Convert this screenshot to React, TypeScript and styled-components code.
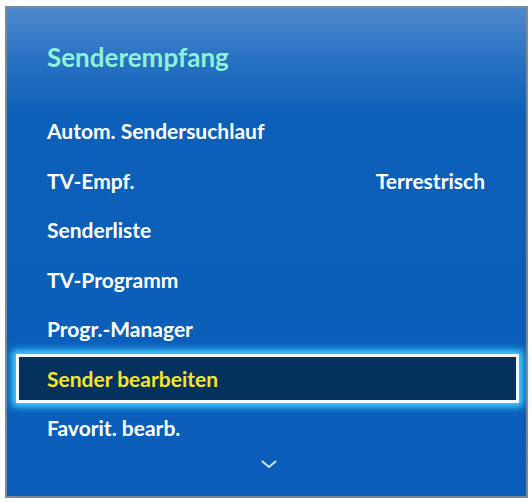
import styled, { createGlobalStyle } from "styled-components"

const GlobalStyle = createGlobalStyle`
html, body {
    margin: 0;
    padding: 0;
    background: #ffffff;
}
body {
    font-family: Lato, "Open Sans", sans-serif;
}
`

interface MenuItem {
    label: string
    value?: string
}

const items: MenuItem[] = [
    { label: "Autom. Sendersuchlauf" },
    { label: "TV-Empf.", value: "Terrestrisch" },
    { label: "Senderliste" },
    { label: "TV-Programm" },
    { label: "Progr.-Manager" },
    { label: "Sender bearbeiten" },
    { label: "Favorit. bearb." },
]

const SELECTED = 5

export default function App() {
    return (
        <>
            <GlobalStyle />
            <Page>
                <Panel>
                    <Title>Senderempfang</Title>
                    <List>
                        {items.map((item, idx) => (
                            <Row key={item.label} $selected={idx === SELECTED}>
                                <span>{item.label}</span>
                                {item.value && <Value>{item.value}</Value>}
                            </Row>
                        ))}
                    </List>
                    <More>
                        <svg width="16" height="9" viewBox="0 0 16 9">
                            <path d="M1.5 1.5 L8 7 L14.5 1.5" fill="none" stroke="#d3e3f6" strokeWidth="2" strokeLinecap="round" strokeLinejoin="round" />
                        </svg>
                    </More>
                </Panel>
            </Page>
        </>
    )
}

const Page = styled.div`
padding: 6px 0 0 5px;
width: 532px;
height: 503px;
box-sizing: border-box;
`

const Panel = styled.div`
width: 523px;
height: 492px;
box-sizing: border-box;
border: 2px solid #7b8899;
background: linear-gradient(180deg, #4d89cd 0%, #2a73c3 10%, #0d60b9 22%, #0a5eb9 100%);
display: flex;
flex-direction: column;
padding: 0 7px 0 9px;
`

const Title = styled.div`
color: #8ef1d8;
font-size: 26px;
font-weight: 700;
padding: 33px 0 0 31px;
height: 65px;
`

const List = styled.div`
display: flex;
flex-direction: column;
`

const Row = styled.div<{ $selected: boolean }>`
height: 49.5px;
box-sizing: border-box;
display: flex;
align-items: center;
justify-content: space-between;
padding: 0 31px 0 28px;
font-size: 21px;
font-weight: 700;
color: ${p => (p.$selected ? "#f6e52c" : "#ffffff")};
border: 3px solid ${p => (p.$selected ? "#f4fbff" : "transparent")};
background: ${p => (p.$selected ? "#05315f" : "transparent")};
box-shadow: ${p => (p.$selected ? "0 0 6px 3px #3fd0ff, 0 0 10px 4px rgba(60, 200, 255, 0.5)" : "none")};
`

const Value = styled.span`
color: #ffffff;
`

const More = styled.div`
display: flex;
justify-content: center;
padding-top: 7px;
padding-left: 2px;
`
